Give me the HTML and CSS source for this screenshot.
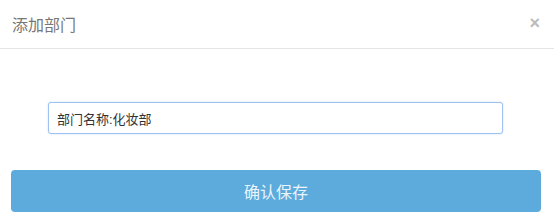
FILE: index.html
```html
<!DOCTYPE html>
<html lang="zh-CN">

<head>
    <meta charset="UTF-8">
    <title>添加部门</title>
    <link rel="stylesheet" href="styles.css">
</head>

<body>
    <div class="modal">
        <div class="modal-header">
            <h4 class="modal-title">添加部门</h4>
            <span class="close">&times;</span>
        </div>
        <div class="modal-body">
            <input type="text" class="dept-input" value="部门名称:化妆部">
        </div>
        <div class="modal-footer">
            <button class="btn-save">确认保存</button>
        </div>
    </div>
</body>

</html>
```

FILE: styles.css
```css
body {
    margin: 0;
    background-color: #fff;
    font-family: "Liberation Sans", "Noto Sans CJK SC", sans-serif;
}

.modal {
    width: 554px;
}

.modal-header {
    height: 49px;
    border-bottom: 1px solid #e5e5e5;
    display: flex;
    align-items: center;
    justify-content: space-between;
    padding: 0 14px 0 12px;
    box-sizing: border-box;
}

.modal-title {
    margin: 0;
    font-family: "Liberation Serif", "Noto Sans CJK SC", serif;
    font-size: 16px;
    font-weight: normal;
    color: #777;
}

.close {
    font-size: 18px;
    font-weight: bold;
    color: #bbb;
    line-height: 1;
    margin-top: -2px;
}

.modal-body {
    padding: 53px 0 0 48px;
}

.dept-input {
    width: 455px;
    height: 32px;
    box-sizing: border-box;
    border: 1px solid #9ec0f2;
    border-radius: 3px;
    box-shadow: 0 0 2px #c6dbfa;
    padding: 0 8px;
    font-family: "Liberation Sans", "Noto Sans CJK SC", sans-serif;
    font-size: 13px;
    color: #333;
    outline: none;
}

.modal-footer {
    padding: 36px 0 0 11px;
}

.btn-save {
    width: 530px;
    height: 42px;
    border: none;
    border-radius: 4px;
    background-color: #5dabdc;
    color: #eaf4fb;
    font-family: "Liberation Sans", "Noto Sans CJK SC", sans-serif;
    font-size: 16px;
}
```
